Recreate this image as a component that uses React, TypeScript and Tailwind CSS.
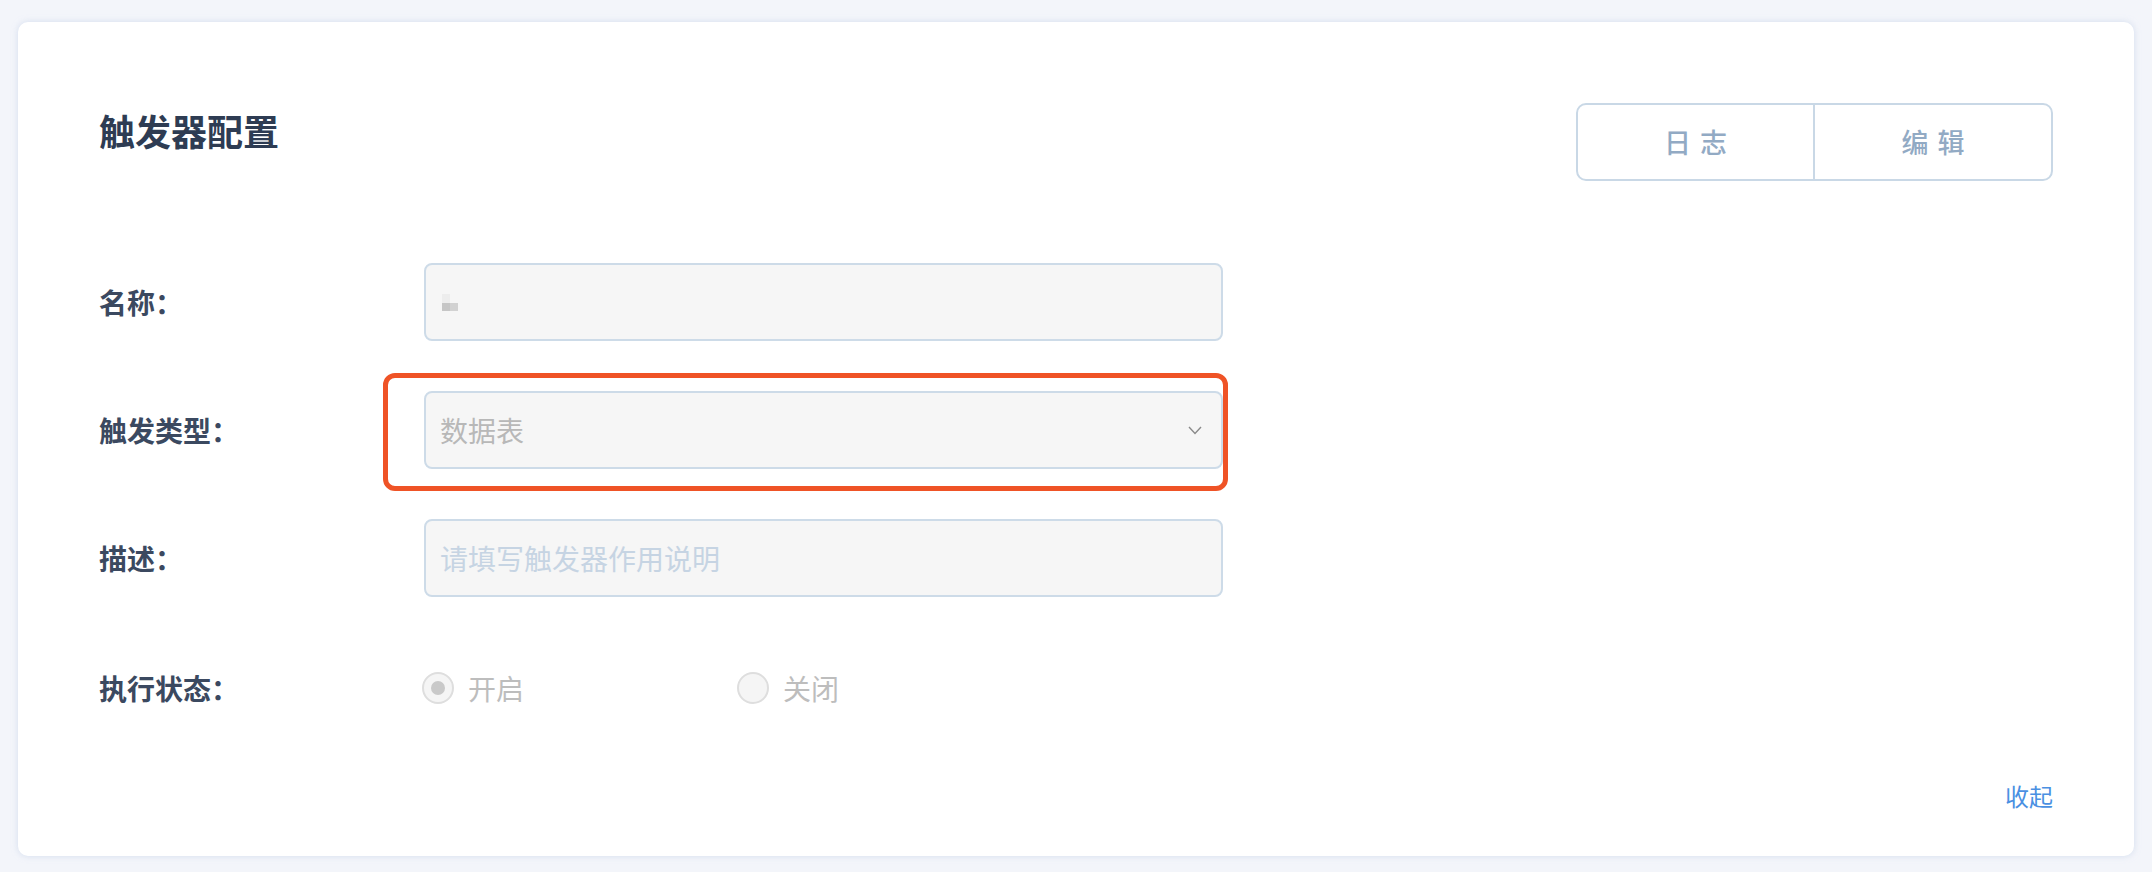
import { useState } from "react";

const font = {
  fontFamily: '"Noto Sans CJK SC", "Noto Sans", sans-serif',
};

const Row = ({ label, children }: { label: string; children: React.ReactNode }) => {
  return (
    <div className="flex items-center h-[78px]">
      <div className="w-[325px] shrink-0 text-[28px] font-semibold text-[#3b4960] leading-none">
        {label}
      </div>
      {children}
    </div>
  );
};

const Radio = ({ checked, label }: { checked: boolean; label: string }) => {
  return (
    <div className="flex items-center gap-[14px]">
      <span className="w-[32px] h-[32px] rounded-full border-2 border-[#dedede] bg-[#f5f5f5] flex items-center justify-center">
        {checked && <span className="w-[14px] h-[14px] rounded-full bg-[#c9c9c9]" />}
      </span>
      <span className="text-[28px] text-[#bdbdbd] leading-none">{label}</span>
    </div>
  );
};

export default function App() {
  const [status] = useState("on");

  return (
    <div style={font} className="w-[2152px] h-[872px] bg-[#f3f5fa] pt-[22px] px-[18px] pb-[16px]">
      <div className="h-full bg-white rounded-[10px] shadow-[0_0_6px_rgba(190,205,230,0.6)] px-[81px] pt-[81px] flex flex-col">
        {/* header */}
        <div className="flex items-start justify-between">
          <h1 className="mt-[9px] text-[36px] leading-[36px] font-semibold text-[#2e3c53]">
            触发器配置
          </h1>
          <div className="flex h-[78px] border-2 border-[#c9d8e6] rounded-[10px] overflow-hidden">
            <button className="w-[237px] flex items-center justify-center text-[27px] font-medium tracking-[9px] pl-[9px] text-[#92aac4] border-r-2 border-[#c9d8e6]">
              日志
            </button>
            <button className="w-[236px] flex items-center justify-center text-[27px] font-medium tracking-[9px] pl-[9px] text-[#92aac4]">
              编辑
            </button>
          </div>
        </div>

        {/* form */}
        <div className="mt-[82px] flex flex-col gap-[50px]">
          <Row label="名称：">
            <div className="w-[799px] h-[78px] border-2 border-[#cddbe8] rounded-[8px] bg-[#f6f6f6] flex items-center pl-[16px]">
              <div className="flex flex-col">
                <div className="w-[8px] h-[9px] bg-[#ededed]" />
                <div className="flex">
                  <div className="w-[8px] h-[8px] bg-[#c6c6c6]" />
                  <div className="w-[8px] h-[8px] bg-[#d2d2d2]" />
                </div>
              </div>
            </div>
          </Row>

          <Row label="触发类型：">
            <div className="relative">
              <div className="w-[799px] h-[78px] border-2 border-[#cddbe8] rounded-[8px] bg-[#f6f6f6] flex items-center justify-between pl-[14px] pr-[19px]">
                <span className="text-[28px] text-[#b8b8b8] leading-none">数据表</span>
                <svg width="14" height="9" viewBox="0 0 14 9" fill="none">
                  <path d="M1 1l6 6.5L13 1" stroke="#8a8a8a" strokeWidth="1.4" />
                </svg>
              </div>
              {/* highlight box */}
              <div className="absolute left-[-41px] right-[-5px] top-[-18px] bottom-[-22px] border-[5px] border-[#ef5326] rounded-[12px] pointer-events-none" />
            </div>
          </Row>

          <Row label="描述：">
            <div className="w-[799px] h-[78px] border-2 border-[#cddbe8] rounded-[8px] bg-[#f6f6f6] flex items-center pl-[14px]">
              <span className="text-[28px] text-[#c6d4e3] leading-none">请填写触发器作用说明</span>
            </div>
          </Row>

          <div className="pt-[2px]">
            <Row label="执行状态：">
              <div className="flex items-center -ml-[2px]">
                <div className="w-[315px]">
                  <Radio checked={status === "on"} label="开启" />
                </div>
                <Radio checked={status === "off"} label="关闭" />
              </div>
            </Row>
          </div>
        </div>

        <div className="mt-[57px] flex justify-end">
          <button className="text-[24px] leading-none text-[#4a90e2]">收起</button>
        </div>
      </div>
    </div>
  );
}
